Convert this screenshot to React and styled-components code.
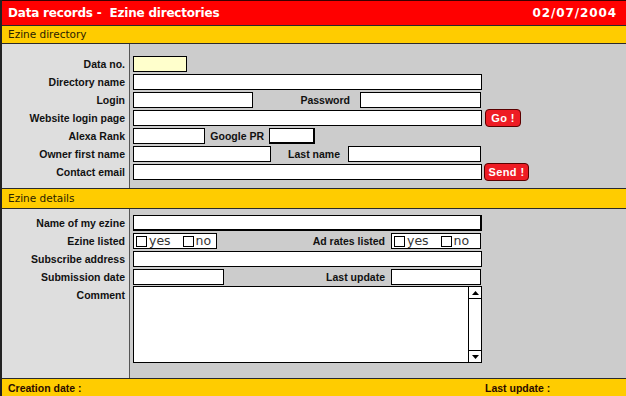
import React from 'react';
import styled, { createGlobalStyle } from 'styled-components';

const GlobalStyle = createGlobalStyle`
  html, body {
    margin: 0;
    padding: 0;
    background: #cccccc;
    overflow: hidden;
  }
`;

const Frame = styled.div`
  width: 100%;
  height: 396px;
  border-left: 2px solid #222;
  box-sizing: border-box;
  background: #cccccc;
  font-family: 'Liberation Sans', Arial, sans-serif;
`;

const TitleBar = styled.div`
  height: 24px;
  border-top: 1px solid #3a0000;
  background: #ff0000;
  display: flex;
  align-items: center;
  justify-content: space-between;
  padding: 0 9px 0 6px;
  color: #fff;
  font-family: 'DejaVu Sans', Verdana, sans-serif;
  font-weight: bold;
  font-size: 12px;
  letter-spacing: -0.2px;
`;

const TitleDate = styled.span`
  letter-spacing: 0.9px;
`;

const SectionHeader = styled.div`
  height: ${(p) => p.$h}px;
  line-height: ${(p) => p.$h}px;
  background: #ffcc00;
  border-top: 1px solid #2a2a2a;
  border-bottom: 1px solid #2a2a2a;
  padding-left: 6px;
  color: #2a2200;
  font-family: 'DejaVu Sans', Verdana, sans-serif;
  font-size: 10.5px;
`;

const Body = styled.div`
  display: grid;
  grid-template-columns: 128px 1fr;
  grid-auto-rows: minmax(18px, auto);
  padding: ${(p) => p.$top}px 0 ${(p) => p.$bottom}px;
  background: linear-gradient(
    to right,
    #dedede 0,
    #dedede 127px,
    #555 127px,
    #555 128px,
    #cccccc 128px
  );
`;

const Label = styled.div`
  text-align: right;
  padding-right: 5px;
  line-height: 18px;
  font-size: 10.5px;
  font-weight: bold;
  color: #111;
  white-space: nowrap;
`;

const FieldCell = styled.div`
  display: flex;
  align-items: ${(p) => (p.$top ? 'flex-start' : 'center')};
  padding-left: 3px;
`;

const Input = styled.div`
  box-sizing: border-box;
  width: ${(p) => p.$w}px;
  height: 16px;
  background: ${(p) => (p.$yellow ? '#ffffcc' : '#fff')};
  border: 1px solid #000;
  border-right-width: ${(p) => (p.$thick ? 2 : 1)}px;
  border-bottom-width: ${(p) => (p.$thick ? 2 : 1)}px;
  flex-shrink: 0;
`;

const InlineLabel = styled.span`
  box-sizing: border-box;
  width: ${(p) => p.$w}px;
  padding-right: ${(p) => p.$pr}px;
  text-align: right;
  font-size: 10.5px;
  font-weight: bold;
  color: #111;
  white-space: nowrap;
  flex-shrink: 0;
`;

const RedButton = styled.div`
  box-sizing: border-box;
  width: ${(p) => p.$w}px;
  height: 18px;
  margin-left: ${(p) => p.$ml}px;
  background: #ee1c24;
  border: 1px solid #5a0000;
  border-radius: 4px;
  color: #fff;
  font-size: 11px;
  font-weight: bold;
  letter-spacing: 0.4px;
  display: flex;
  align-items: center;
  justify-content: center;
  flex-shrink: 0;
`;

const CheckGroup = styled.div`
  box-sizing: border-box;
  width: ${(p) => p.$w}px;
  height: 16px;
  border: 1px solid #000;
  background: #fff;
  display: flex;
  align-items: center;
  padding-left: 2px;
  flex-shrink: 0;
  font-family: 'DejaVu Sans', Verdana, sans-serif;
  font-size: 12.5px;
  color: #333;
`;

const CheckBox = styled.span`
  box-sizing: border-box;
  width: 11px;
  height: 11px;
  border: 1px solid #000;
  background: #fff;
  margin-left: ${(p) => p.$ml || 0}px;
  margin-right: 2px;
`;

const CheckText = styled.span`
  line-height: 14px;
`;

const CommentBox = styled.div`
  box-sizing: border-box;
  width: 349px;
  height: 77px;
  border: 1px solid #000;
  background: #fff;
  display: flex;
`;

const CommentArea = styled.textarea`
  flex: 1;
  border: none;
  outline: none;
  resize: none;
  padding: 2px;
  background: transparent;
  font-family: 'DejaVu Sans', Verdana, sans-serif;
  font-size: 11px;
`;

const ScrollBar = styled.div`
  width: 12px;
  border-left: 1px solid #000;
  display: flex;
  flex-direction: column;
  justify-content: space-between;
`;

const ScrollArrow = styled.div`
  height: 12px;
  box-sizing: border-box;
  border-bottom: ${(p) => (p.$down ? 'none' : '1px solid #000')};
  border-top: ${(p) => (p.$down ? '1px solid #000' : 'none')};
  display: flex;
  align-items: center;
  justify-content: center;
`;

const Footer = styled.div`
  height: 18px;
  line-height: 18px;
  background: #ffcc00;
  border-top: 1px solid #2a2a2a;
  display: grid;
  grid-template-columns: 477px 1fr;
  padding-left: 6px;
  font-size: 10.5px;
  font-weight: bold;
  color: #2a0a00;
`;

function Arrow({ down }) {
  return (
    <svg width="7" height="4" viewBox="0 0 7 4">
      <polygon points={down ? '0,0 7,0 3.5,4' : '0,4 7,4 3.5,0'} fill="#000" />
    </svg>
  );
}

function Checks({ w, gap }) {
  return (
    <CheckGroup $w={w}>
      <CheckBox />
      <CheckText>yes</CheckText>
      <CheckBox $ml={gap} />
      <CheckText>no</CheckText>
    </CheckGroup>
  );
}

export default function App() {
  return (
    <>
      <GlobalStyle />
      <Frame>
        <TitleBar>
          <span>Data records -&nbsp; Ezine directories</span>
          <TitleDate>02/07/2004</TitleDate>
        </TitleBar>

        <SectionHeader $h={17}>Ezine directory</SectionHeader>
        <Body $top={11} $bottom={7}>
          <Label>Data no.</Label>
          <FieldCell>
            <Input $w={54} $yellow />
          </FieldCell>

          <Label>Directory name</Label>
          <FieldCell>
            <Input $w={349} />
          </FieldCell>

          <Label>Login</Label>
          <FieldCell>
            <Input $w={120} />
            <InlineLabel $w={107} $pr={10}>Password</InlineLabel>
            <Input $w={121} />
          </FieldCell>

          <Label>Website login page</Label>
          <FieldCell>
            <Input $w={349} />
            <RedButton $w={36} $ml={3}>Go !</RedButton>
          </FieldCell>

          <Label>Alexa Rank</Label>
          <FieldCell>
            <Input $w={72} />
            <InlineLabel $w={64} $pr={5}>Google PR</InlineLabel>
            <Input $w={46} $thick />
          </FieldCell>

          <Label>Owner first name</Label>
          <FieldCell>
            <Input $w={138} />
            <InlineLabel $w={77} $pr={8}>Last name</InlineLabel>
            <Input $w={133} />
          </FieldCell>

          <Label>Contact email</Label>
          <FieldCell>
            <Input $w={349} />
            <RedButton $w={45} $ml={2}>Send !</RedButton>
          </FieldCell>
        </Body>

        <SectionHeader $h={19}>Ezine details</SectionHeader>
        <Body $top={5} $bottom={15}>
          <Label>Name of my ezine</Label>
          <FieldCell>
            <Input $w={349} $thick />
          </FieldCell>

          <Label>Ezine listed</Label>
          <FieldCell>
            <Checks w={84} gap={12} />
            <InlineLabel $w={174} $pr={6}>Ad rates listed</InlineLabel>
            <Checks w={90} gap={12} />
          </FieldCell>

          <Label>Subscribe address</Label>
          <FieldCell>
            <Input $w={349} />
          </FieldCell>

          <Label>Submission date</Label>
          <FieldCell>
            <Input $w={91} />
            <InlineLabel $w={167} $pr={6}>Last update</InlineLabel>
            <Input $w={90} />
          </FieldCell>

          <Label>Comment</Label>
          <FieldCell $top>
            <CommentBox>
              <CommentArea />
              <ScrollBar>
                <ScrollArrow>
                  <Arrow />
                </ScrollArrow>
                <ScrollArrow $down>
                  <Arrow down />
                </ScrollArrow>
              </ScrollBar>
            </CommentBox>
          </FieldCell>
        </Body>

        <Footer>
          <span>Creation date :</span>
          <span>Last update :</span>
        </Footer>
      </Frame>
    </>
  );
}
